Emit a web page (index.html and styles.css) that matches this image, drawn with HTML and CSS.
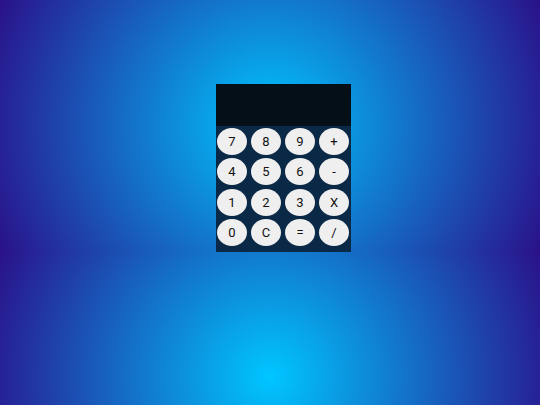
FILE: index.html
```html
<!DOCTYPE html>
<html>
<head>
<meta charset="utf-8">
<link rel="stylesheet" href="styles.css">
</head>
<body>
<div class="calc">
  <div class="display"></div>
  <div class="keys">
    <button class="key">7</button>
    <button class="key">8</button>
    <button class="key">9</button>
    <button class="key">+</button>
    <button class="key">4</button>
    <button class="key">5</button>
    <button class="key">6</button>
    <button class="key">-</button>
    <button class="key">1</button>
    <button class="key">2</button>
    <button class="key">3</button>
    <button class="key">X</button>
    <button class="key">0</button>
    <button class="key">C</button>
    <button class="key">=</button>
    <button class="key">/</button>
  </div>
</div>
</body>
</html>
```

FILE: styles.css
```css
html {
  height: 100%;
  background: radial-gradient(circle farthest-corner, #00c6ff 0%, #2a118a 100%);
  background-size: 100% 251px;
  background-repeat: repeat;
}
body {
  margin: 0;
  padding: 84px 0 0 216px;
  font-family: Roboto, "Liberation Sans", sans-serif;
}
.calc {
  width: 135px;
  background: #0a2946;
}
.display {
  height: 42px;
  background: #040f17;
}
.keys {
  display: grid;
  grid-template-columns: repeat(4, 30px);
  grid-auto-rows: 27px;
  column-gap: 4px;
  row-gap: 3.4px;
  padding: 2px 0 6px 1px;
}
.key {
  margin: 0;
  padding: 0;
  border: none;
  border-radius: 50%;
  background: #efefef;
  color: #111;
  font-family: Roboto, "Liberation Sans", sans-serif;
  font-size: 13px;
  line-height: 27px;
  text-align: center;
}
```
